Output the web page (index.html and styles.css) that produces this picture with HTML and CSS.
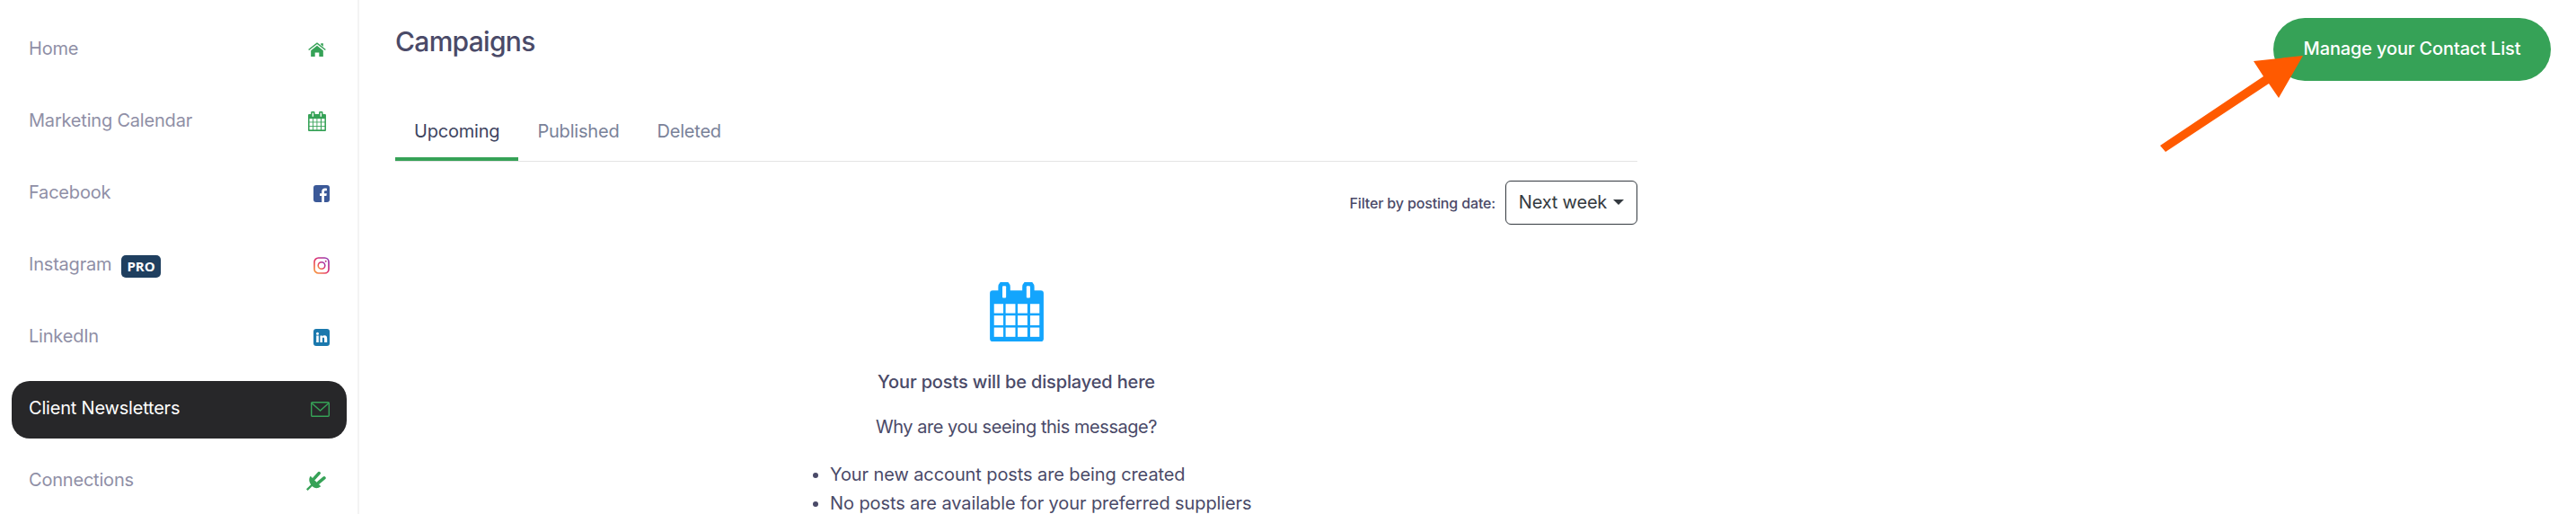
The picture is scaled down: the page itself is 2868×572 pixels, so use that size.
FILE: index.html
```html
<!DOCTYPE html>
<html lang="en">

<head>
    <meta charset="UTF-8">
    <meta name="viewport" content="width=device-width, initial-scale=1.0">
    <title>Campaigns</title>
    <link rel="stylesheet" href="styles.css">
</head>

<body>
    <svg class="defs" width="0" height="0">
        <symbol id="calendar" viewBox="0 0 58 64">
            <path fill="currentColor" d="M3 9h6V5a6.500 6.500 0 0 1 13 0v4h13V5a6.500 6.500 0 0 1 13 0v4h7a3 3 0 0 1 3 3v49a3 3 0 0 1-3 3H3a3 3 0 0 1-3-3V12a3 3 0 0 1 3-3z" />
            <g fill="#fff">
                <rect x="13.500" y="4" width="4" height="13" rx="1" />
                <rect x="39.500" y="4" width="4" height="13" rx="1" />
                <rect x="4.500" y="23.500" width="10" height="10" />
                <rect x="17" y="23.500" width="10.500" height="10" />
                <rect x="30" y="23.500" width="10.500" height="10" />
                <rect x="43.500" y="23.500" width="10" height="10" />
                <rect x="4.500" y="36" width="10" height="10.500" />
                <rect x="17" y="36" width="10.500" height="10.500" />
                <rect x="30" y="36" width="10.500" height="10.500" />
                <rect x="43.500" y="36" width="10" height="10.500" />
                <rect x="4.500" y="49" width="10" height="10" />
                <rect x="17" y="49" width="10.500" height="10" />
                <rect x="30" y="49" width="10.500" height="10" />
                <rect x="43.500" y="49" width="10" height="10" />
            </g>
        </symbol>
    </svg>

    <div class="page">
        <nav class="sidebar">
            <a class="side-item">
                <span class="side-label">Home</span>
                <svg class="side-icon inset" width="20" height="16" viewBox="0 0 19 15">
                    <path fill="none" stroke="#36a257" stroke-width="1.400" d="M.6 8 9.500 1l8.900 7" />
                    <path fill="#36a257" d="M13.500 1h2.500v3.500l-2.500-2zM3 8.700l6.500-5.200L16 8.700V15h-4.300v-4.200H7.300V15H3z" />
                </svg>
            </a>
            <a class="side-item">
                <span class="side-label">Marketing Calendar</span>
                <svg class="side-icon inset green" width="20" height="22"><use href="#calendar" /></svg>
            </a>
            <a class="side-item">
                <span class="side-label">Facebook</span>
                <svg class="side-icon" width="18" height="19" viewBox="0 0 18 19">
                    <rect width="18" height="19" rx="3" fill="#3b5998" />
                    <path fill="#fff" d="M12 19v-7h2.400l.4-2.800H12V7.500c0-.8.300-1.300 1.400-1.300h1.500V3.700c-.3 0-1.100-.1-2.100-.1-2.200 0-3.600 1.300-3.600 3.700v1.900H7V12h2.200v7z" />
                </svg>
            </a>
            <a class="side-item">
                <span class="side-label">Instagram<span class="badge">PRO</span></span>
                <svg class="side-icon" width="18" height="19" viewBox="0 0 18 19">
                    <defs>
                        <linearGradient id="ig" x1="0" y1="1" x2="1" y2="0">
                            <stop offset="0" stop-color="#f9a03c" />
                            <stop offset=".5" stop-color="#e1306c" />
                            <stop offset="1" stop-color="#8a3ab9" />
                        </linearGradient>
                    </defs>
                    <rect x="1" y="1" width="16" height="17" rx="4.500" fill="none" stroke="url(#ig)" stroke-width="1.700" />
                    <circle cx="9" cy="9.500" r="3.800" fill="none" stroke="url(#ig)" stroke-width="1.600" />
                    <circle cx="13.700" cy="4.800" r="1" fill="#c13584" />
                </svg>
            </a>
            <a class="side-item">
                <span class="side-label">LinkedIn</span>
                <svg class="side-icon" width="18" height="19" viewBox="0 0 18 19">
                    <rect width="18" height="19" rx="3" fill="#1a78ad" />
                    <path fill="#fff" d="M3.200 7.500h2.600V15H3.200zM4.500 3.700a1.500 1.500 0 1 1 0 3 1.500 1.500 0 0 1 0-3zM7.400 7.500h2.500v1c.4-.7 1.300-1.200 2.400-1.200 2.300 0 2.900 1.500 2.900 3.600V15H12.100v-3.600c0-.9-.1-1.900-1.200-1.900s-1.000.9-1.000 1.900V15H7.400z" />
                </svg>
            </a>
            <a class="side-item active">
                <span class="side-label">Client Newsletters</span>
                <svg class="side-icon" width="21" height="17" viewBox="0 0 21 17">
                    <rect x=".7" y=".7" width="19.600" height="15.600" rx="1" fill="none" stroke="#36a257" stroke-width="1.400" />
                    <path d="M1 1.500 10.500 10 20 1.500" fill="none" stroke="#36a257" stroke-width="1.400" />
                </svg>
            </a>
            <a class="side-item">
                <span class="side-label">Connections</span>
                <svg class="side-icon inset" width="22" height="22" viewBox="0 0 21 21">
                    <path fill="#36a257" d="M4.500 5.500 15.500 16.500c-3.300 2.700-7 2.300-9.500-.5S1.800 8.900 4.500 5.500z" />
                    <path fill="none" stroke="#36a257" stroke-width="3.400" stroke-linecap="round" d="M8.500 8 13.500 2.500M13 12.500l6-5" />
                    <path fill="none" stroke="#36a257" stroke-width="2.200" d="M6.500 14.500 .8 20.200" />
                </svg>
            </a>
        </nav>

        <main class="content">
            <h1 class="title">Campaigns</h1>
            <div class="tabs">
                <a class="tab active">Upcoming</a>
                <a class="tab">Published</a>
                <a class="tab">Deleted</a>
            </div>
            <div class="filter">
                <span class="filter-label">Filter by posting date:</span>
                <button class="filter-btn">Next week<span class="caret"></span></button>
            </div>
            <section class="empty">
                <svg class="empty-icon" width="60" height="66"><use href="#calendar" /></svg>
                <p class="empty-title">Your posts will be displayed here</p>
                <p class="empty-why">Why are you seeing this message?</p>
                <ul class="empty-list">
                    <li>Your new account posts are being created</li>
                    <li>No posts are available for your preferred suppliers</li>
                </ul>
            </section>
        </main>

        <div class="actions">
            <button class="contact-btn">Manage your Contact List</button>
        </div>
    </div>

    <svg class="arrow" width="170" height="120" viewBox="0 0 170 120">
        <polygon fill="#ff5a00" points="5,107 120,30 109,13 164,7 137,54 126,38 11,114" />
    </svg>
</body>

</html>
```

FILE: styles.css
```css
* {
    box-sizing: border-box;
}

html,
body {
    height: 100%;
    overflow: hidden;
}

body {
    margin: 0;
    background: #fff;
    color: #4a4a68;
    font-family: "Inter", "Liberation Sans", sans-serif;
    font-size: 20px;
}

.defs {
    position: absolute;
}

.page {
    display: flex;
    height: 100vh;
}

/* sidebar */
.sidebar {
    flex: none;
    display: flex;
    flex-direction: column;
    gap: 16px;
    width: 400px;
    padding: 24px 12px 0 13px;
    border-right: 2px solid #f3f3f3;
}

.side-item {
    flex: none;
    display: flex;
    align-items: center;
    justify-content: space-between;
    height: 64px;
    padding: 0 19px;
    border-radius: 20px;
    color: #8f8fa6;
}

.side-label {
    display: flex;
    align-items: center;
    position: relative;
    top: -2px;
    letter-spacing: -.2px;
}

.side-item.active {
    background: #272729;
    color: #fff;
}

.side-icon {
    flex: none;
    margin-bottom: 2px;
}

.side-icon.inset {
    margin-right: 4px;
}

.green {
    color: #36a257;
}

.badge {
    margin-left: 11px;
    padding: 0 6px;
    border-radius: 5px;
    background: #1f3f5f;
    color: #fff;
    font-family: "Open Sans", sans-serif;
    font-size: 15px;
    font-weight: 700;
    line-height: 25px;
    letter-spacing: 0;
    position: relative;
    top: 2px;
}

/* main column */
.content {
    flex: none;
    width: 1383px;
    margin-left: 40px;
    padding-top: 28px;
}

.title {
    margin: 0;
    font-size: 30px;
    font-weight: 500;
    line-height: 36px;
    letter-spacing: -.7px;
}

.tabs {
    display: flex;
    margin-top: 48px;
    border-bottom: 1px solid #e4e4e4;
}

.tab {
    padding: 21px 21px 16px;
    border-bottom: 4px solid transparent;
    color: #7a8299;
    line-height: 26px;
    letter-spacing: -.2px;
}

.tab.active {
    border-bottom-color: #36a257;
    color: #3d4460;
}

.filter {
    display: flex;
    align-items: center;
    justify-content: flex-end;
    gap: 11px;
    margin-top: 21px;
}

.filter-label {
    font-size: 16px;
    font-weight: 500;
    letter-spacing: -.15px;
}

.filter-btn {
    display: flex;
    align-items: center;
    justify-content: center;
    gap: 7px;
    width: 147px;
    height: 49px;
    padding: 0 0 2px;
    border: 1px solid #343a40;
    border-radius: 6px;
    background: #fff;
    color: #343a40;
    font: inherit;
    letter-spacing: -.2px;
}

.caret {
    width: 0;
    height: 0;
    border-top: 6px solid #343a40;
    border-left: 6px solid transparent;
    border-right: 6px solid transparent;
}

.empty {
    margin-top: 64px;
    text-align: center;
}

.empty-icon {
    display: block;
    margin: 0 auto;
    color: #13a5fd;
}

.empty-title {
    margin: 30px 0 0;
    font-weight: 500;
    line-height: 30px;
    letter-spacing: -.15px;
}

.empty-why {
    margin: 20px 0 0;
    line-height: 30px;
    letter-spacing: -.45px;
}

.empty-list {
    width: 515px;
    margin: 22px auto 0;
    padding-left: 50px;
    text-align: left;
    line-height: 32px;
    letter-spacing: -.1px;
    white-space: nowrap;
}

/* top right button */
.actions {
    margin-left: auto;
    padding: 20px 28px 0 0;
}

.contact-btn {
    width: 309px;
    height: 70px;
    padding: 0 0 3px;
    border: 0;
    border-radius: 35px;
    background: #36a257;
    color: #fff;
    font: inherit;
    font-weight: 500;
    letter-spacing: -.15px;
}

.arrow {
    position: absolute;
    left: 2400px;
    top: 55px;
}
```
